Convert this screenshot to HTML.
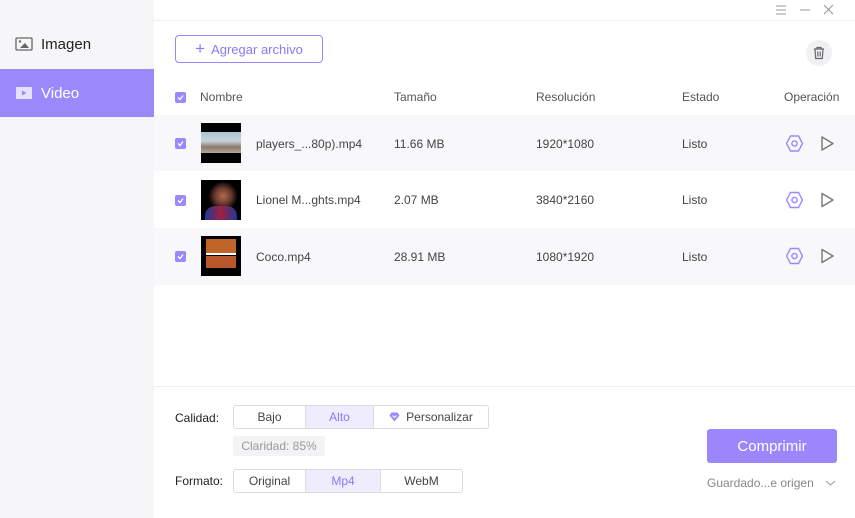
<!DOCTYPE html>
<html><head><meta charset="utf-8"><style>
*{box-sizing:border-box;margin:0;padding:0}
body{width:855px;height:518px;overflow:hidden;font-family:"Liberation Sans",sans-serif;background:#fff;position:relative;color:#333}
.side{position:absolute;left:0;top:0;width:154px;height:518px;background:#f6f6f8}
.nav{position:absolute;left:0;width:154px;height:48px;display:flex;align-items:center;padding-left:15px;font-size:15px;color:#222}
.nav svg{margin-right:8px}
.nav.act{background:#9b89fc;color:#fff}
.topline{position:absolute;left:154px;right:0;top:20px;height:1px;background:#eee}
.abs{position:absolute}
.btnadd{left:175px;top:35px;width:148px;height:28px;border:1px solid #9b89fc;border-radius:4px;color:#8b79f5;font-size:13px;display:flex;align-items:center;justify-content:center}
.trash{left:806px;top:40px;width:26px;height:26px;border-radius:13px;background:#f1f1f4;display:flex;align-items:center;justify-content:center}
.cb{width:11px;height:11px;background:#9b89fc;border-radius:2px;display:flex;align-items:center;justify-content:center}
.hdr{font-size:12px;color:#555}
.row{position:absolute;left:154px;right:0;height:57px}
.t{position:absolute;font-size:12px;color:#444}
.thumb{position:absolute;left:201px;width:40px;height:40px;background:#000}
.seg{position:absolute;height:24px;border:1px solid #ddd;border-radius:3px;display:flex;font-size:12px;color:#444}
.seg div{display:flex;align-items:center;justify-content:center;border-right:1px solid #ddd}
.seg div:last-child{border-right:none}
.seg .on{background:#efedfd;color:#8b79f5}
</style></head><body>
<div class="side">
<div class="nav" style="top:20px"><svg width="18" height="14" viewBox="0 0 18 14"><rect x="1" y="1" width="16" height="12" rx="1" fill="none" stroke="#666" stroke-width="1.3"/><circle cx="5" cy="4.5" r="1.2" fill="#666"/><path d="M5 11 L10 6 L14 11Z" fill="#666"/></svg>Imagen</div>
<div class="nav act" style="top:69px"><svg width="18" height="14" viewBox="0 0 18 14"><rect x="1" y="1" width="16" height="12" rx="1" fill="#e6e1ff"/><path d="M7 4.5 L11.5 7 L7 9.5Z" fill="#9b89fc"/></svg>Video</div>
</div>
<div class="topline"></div>
<svg class="abs" style="left:774px;top:4px" width="60" height="12" viewBox="0 0 60 12"><path d="M2 2h10M2 6h10M2 10h10M26 6h10M50 1l9 9M59 1l-9 9" stroke="#999" stroke-width="1.1"/></svg>
<div class="abs btnadd"><span style="font-size:17px;margin-right:6px;font-weight:300">+</span>Agregar archivo</div>
<div class="abs trash"><svg width="14" height="14" viewBox="0 0 14 14"><path d="M2 3h10M5 3V1.5h4V3M3 3.5l.7 9h6.6l.7-9M5.8 5.5v5M8.2 5.5v5" stroke="#666" fill="none" stroke-width="1.2"/></svg></div>
<div class="abs cb" style="left:175px;top:92px"><svg width="9" height="9" viewBox="0 0 9 9"><path d="M2 4.5l2 2 3-4" stroke="#fff" fill="none" stroke-width="1.3"/></svg></div>
<div class="abs hdr" style="left:200px;top:90px">Nombre</div>
<div class="abs hdr" style="left:394px;top:90px">Tamaño</div>
<div class="abs hdr" style="left:536px;top:90px">Resolución</div>
<div class="abs hdr" style="left:682px;top:90px">Estado</div>
<div class="abs hdr" style="left:784px;top:90px">Operación</div>

<div class="row" style="top:115px;background:#f8f8fa"></div>
<div class="row" style="top:171px;background:#fff"></div>
<div class="row" style="top:228px;background:#f8f8fa"></div>

<div class="thumb" style="top:123px;background:linear-gradient(#000 0,#000 22%,#a9c3d6 22%,#c8d3d8 45%,#8a7a6a 60%,#b8a898 75%,#000 75%)"></div>
<div class="thumb" style="top:180px;background:radial-gradient(circle at 55% 40%,#b06a50 0,#6a3a30 25%,#000 45%)"><div style="position:absolute;left:4px;bottom:0;width:32px;height:14px;background:linear-gradient(90deg,#1a3a9a,#a02040,#1a3a9a);border-radius:10px 10px 0 0"></div></div>
<div class="thumb" style="top:236px"><div style="position:absolute;left:5px;top:3px;width:30px;height:14px;background:#c0642a"></div><div style="position:absolute;left:5px;top:17px;width:30px;height:2px;background:#fff"></div><div style="position:absolute;left:5px;top:20px;width:30px;height:12px;background:#b8582a"></div></div>

<script></script>
<div id="rows"></div>
<div class="abs cb" style="left:175px;top:138px"><svg width="9" height="9" viewBox="0 0 9 9"><path d="M2 4.5l2 2 3-4" stroke="#fff" fill="none" stroke-width="1.3"/></svg></div>
<div class="abs cb" style="left:175px;top:195px"><svg width="9" height="9" viewBox="0 0 9 9"><path d="M2 4.5l2 2 3-4" stroke="#fff" fill="none" stroke-width="1.3"/></svg></div>
<div class="abs cb" style="left:175px;top:251px"><svg width="9" height="9" viewBox="0 0 9 9"><path d="M2 4.5l2 2 3-4" stroke="#fff" fill="none" stroke-width="1.3"/></svg></div>

<div class="t" style="left:256px;top:137px">players_...80p).mp4</div>
<div class="t" style="left:394px;top:137px">11.66 MB</div>
<div class="t" style="left:536px;top:137px">1920*1080</div>
<div class="t" style="left:682px;top:137px">Listo</div>
<div class="t" style="left:256px;top:193px">Lionel M...ghts.mp4</div>
<div class="t" style="left:394px;top:193px">2.07 MB</div>
<div class="t" style="left:536px;top:193px">3840*2160</div>
<div class="t" style="left:682px;top:193px">Listo</div>
<div class="t" style="left:256px;top:250px">Coco.mp4</div>
<div class="t" style="left:394px;top:250px">28.91 MB</div>
<div class="t" style="left:536px;top:250px">1080*1920</div>
<div class="t" style="left:682px;top:250px">Listo</div>

<svg class="abs" style="left:786px;top:134px" width="50" height="132" viewBox="0 0 50 132">
<g fill="none" stroke-width="1.4">
<g stroke="#9b89fc"><path d="M4.5 2L12.5 2L16.5 9.5L12.5 17L4.5 17L0.5 9.5Z" transform="translate(0,0)"/><circle cx="8.5" cy="9.5" r="2.6"/>
<path d="M4.5 58.5L12.5 58.5L16.5 66L12.5 73.5L4.5 73.5L0.5 66Z"/><circle cx="8.5" cy="66" r="2.6"/>
<path d="M4.5 114.5L12.5 114.5L16.5 122L12.5 129.5L4.5 129.5L0.5 122Z"/><circle cx="8.5" cy="122" r="2.6"/></g>
<g stroke="#777" stroke-linejoin="round"><path d="M36 3L47 9.5L36 16Z"/><path d="M36 59.5L47 66L36 72.5Z"/><path d="M36 115.5L47 122L36 128.5Z"/></g>
</g></svg>

<div class="abs" style="left:154px;right:0;top:386px;height:1px;background:#eee"></div>
<div class="t" style="left:175px;top:411px;color:#222">Calidad:</div>
<div class="seg" style="left:233px;top:405px;width:256px"><div style="width:72px">Bajo</div><div class="on" style="width:68px">Alto</div><div style="flex:1"><svg width="11" height="10" viewBox="0 0 11 10" style="margin-right:6px"><path d="M2.5 0.5h6l2 3-5 6-5-6z" fill="#9b89fc"/><path d="M3.5 3.5l2 2 2-2" stroke="#fff" fill="none"/></svg>Personalizar</div></div>
<div class="abs" style="left:233px;top:436px;width:92px;height:20px;background:#f3f3f5;border-radius:2px;font-size:12px;color:#999;display:flex;align-items:center;justify-content:center">Claridad: 85%</div>
<div class="t" style="left:175px;top:474px;color:#222">Formato:</div>
<div class="seg" style="left:233px;top:469px;width:230px"><div style="width:72px">Original</div><div class="on" style="width:75px">Mp4</div><div style="flex:1">WebM</div></div>
<div class="abs" style="left:707px;top:429px;width:130px;height:34px;background:#9b87fb;border-radius:3px;color:#fff;font-size:15px;display:flex;align-items:center;justify-content:center">Comprimir</div>
<div class="t" style="left:707px;top:476px;color:#888">Guardado...e origen</div>
<svg class="abs" style="left:825px;top:479px" width="11" height="8" viewBox="0 0 11 8"><path d="M1 2l4.5 4 4.5-4" stroke="#999" fill="none"/></svg>
</body></html>
